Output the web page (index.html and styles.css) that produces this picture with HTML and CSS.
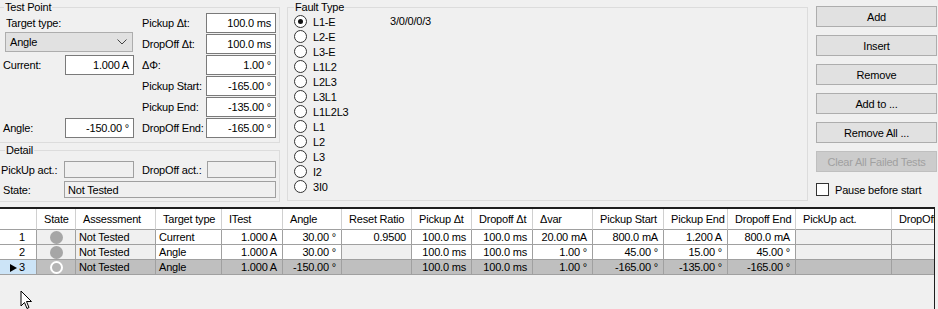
FILE: index.html
```html
<!DOCTYPE html>
<html lang="en">
<head>
  <meta charset="UTF-8" />
  <title>Test Points</title>
  <link rel="stylesheet" href="styles.css">
</head>
<body>

  <div class="top">
    <div class="left-col">
      <fieldset class="group test-point">
        <legend>Test Point</legend>
        <div class="tp-grid">
          <span class="lbl span2 tt">Target type:</span>
          <span class="lbl c4">Pickup Δt:</span>
          <span class="box c5">100.0 ms</span>

          <div class="combo span2">
            <span>Angle</span>
            <svg width="10" height="6" viewBox="0 0 10 6"><polyline points="0.5,0.5 5,5 9.5,0.5" fill="none" stroke="#444" stroke-width="1"/></svg>
          </div>
          <span class="lbl c4">DropOff Δt:</span>
          <span class="box c5">100.0 ms</span>

          <span class="lbl c1">Current:</span>
          <span class="box c2">1.000 A</span>
          <span class="lbl c4">ΔΦ:</span>
          <span class="box c5">1.00 °</span>

          <span class="lbl c4">Pickup Start:</span>
          <span class="box c5">-165.00 °</span>

          <span class="lbl c4">Pickup End:</span>
          <span class="box c5">-135.00 °</span>

          <span class="lbl c1">Angle:</span>
          <span class="box c2">-150.00 °</span>
          <span class="lbl c4">DropOff End:</span>
          <span class="box c5">-165.00 °</span>
        </div>
      </fieldset>

      <fieldset class="group detail">
        <legend>Detail</legend>
        <div class="dt-grid">
          <span class="lbl c1 tight">PickUp act.:</span>
          <span class="box off c2"></span>
          <span class="lbl c4">DropOff act.:</span>
          <span class="box off c5"></span>

          <span class="lbl c1">State:</span>
          <span class="box off state">Not Tested</span>
        </div>
      </fieldset>
    </div>

    <fieldset class="group fault">
      <legend>Fault Type</legend>
      <div class="fault-body">
        <div class="radios">
          <div class="radio-item"><span class="radio on"></span>L1-E</div>
          <div class="radio-item"><span class="radio"></span>L2-E</div>
          <div class="radio-item"><span class="radio"></span>L3-E</div>
          <div class="radio-item"><span class="radio"></span>L1L2</div>
          <div class="radio-item"><span class="radio"></span>L2L3</div>
          <div class="radio-item"><span class="radio"></span>L3L1</div>
          <div class="radio-item"><span class="radio"></span>L1L2L3</div>
          <div class="radio-item"><span class="radio"></span>L1</div>
          <div class="radio-item"><span class="radio"></span>L2</div>
          <div class="radio-item"><span class="radio"></span>L3</div>
          <div class="radio-item"><span class="radio"></span>I2</div>
          <div class="radio-item"><span class="radio"></span>3I0</div>
        </div>
        <div class="count">3/0/0/0/3</div>
      </div>
    </fieldset>

    <div class="actions">
      <button>Add</button>
      <button>Insert</button>
      <button>Remove</button>
      <button>Add to ...</button>
      <button>Remove All ...</button>
      <button disabled>Clear All Failed Tests</button>
      <div class="check-row"><span class="check"></span>Pause before start</div>
    </div>
  </div>

  <div class="grid-wrap">
    <table class="tests">
      <colgroup>
        <col class="w-rh"><col class="w-state"><col class="w-assess"><col class="w-type"><col class="w-itest">
        <col class="w-angle"><col class="w-reset"><col class="w-pdt"><col class="w-ddt"><col class="w-var">
        <col class="w-pstart"><col class="w-pend"><col class="w-dend"><col class="w-pact"><col class="w-dact">
      </colgroup>
      <thead>
        <tr>
          <th></th>
          <th>State</th>
          <th>Assessment</th>
          <th>Target type</th>
          <th>ITest</th>
          <th>Angle</th>
          <th>Reset Ratio</th>
          <th>Pickup Δt</th>
          <th>Dropoff Δt</th>
          <th>Δvar</th>
          <th>Pickup Start</th>
          <th>Pickup End</th>
          <th>Dropoff End</th>
          <th>PickUp act.</th>
          <th>DropOff act.</th>
        </tr>
      </thead>
      <tbody>
        <tr>
          <td class="rh">1</td>
          <td class="ro mid"><span class="dot"></span></td>
          <td class="ro">Not Tested</td>
          <td>Current</td>
          <td class="num">1.000 A</td>
          <td class="num">30.00 °</td>
          <td class="num">0.9500</td>
          <td class="num">100.0 ms</td>
          <td class="num">100.0 ms</td>
          <td class="num">20.00 mA</td>
          <td class="num">800.0 mA</td>
          <td class="num">1.200 A</td>
          <td class="num">800.0 mA</td>
          <td class="ro"></td>
          <td class="ro"></td>
        </tr>
        <tr>
          <td class="rh">2</td>
          <td class="ro mid"><span class="dot"></span></td>
          <td class="ro">Not Tested</td>
          <td>Angle</td>
          <td class="num">1.000 A</td>
          <td class="num">30.00 °</td>
          <td class="ro"></td>
          <td class="num">100.0 ms</td>
          <td class="num">100.0 ms</td>
          <td class="num">1.00 °</td>
          <td class="num">45.00 °</td>
          <td class="num">15.00 °</td>
          <td class="num">45.00 °</td>
          <td class="ro"></td>
          <td class="ro"></td>
        </tr>
        <tr class="sel">
          <td class="rh"><span class="arrow"></span>3</td>
          <td class="ro mid"><span class="dot ring"></span></td>
          <td class="ro">Not Tested</td>
          <td>Angle</td>
          <td class="num">1.000 A</td>
          <td class="num">-150.00 °</td>
          <td class="ro"></td>
          <td class="num">100.0 ms</td>
          <td class="num">100.0 ms</td>
          <td class="num">1.00 °</td>
          <td class="num">-165.00 °</td>
          <td class="num">-135.00 °</td>
          <td class="num">-165.00 °</td>
          <td class="ro"></td>
          <td class="ro"></td>
        </tr>
      </tbody>
    </table>
  </div>

  <svg class="cursor" width="14" height="21" viewBox="0 0 14 21">
    <path d="M1 1 L1 16 L4.5 12.5 L7 18.5 L9 17.5 L6.5 11.5 L11.5 11.5 Z" fill="#fff" stroke="#000" stroke-width="1" stroke-linejoin="miter"/>
  </svg>

</body>
</html>
```

FILE: styles.css
```css
body {
  margin: 0;
  width: 938px;
  height: 309px;
  overflow: hidden;
  position: relative;
  background: #f0f0f0;
  font-family: "Liberation Sans", Arial, sans-serif;
  font-size: 11px;
  letter-spacing: -0.2px;
  color: #000;
}
.top {
  display: flex;
  align-items: flex-start;
  padding-top: 1px;
  height: 207px;
  box-sizing: border-box;
}
.group {
  margin: 0;
  padding: 0;
  border: 1px solid #dcdcdc;
  min-width: 0;
}
.group legend {
  padding: 0 1px;
  margin-left: 4px;
  line-height: 12px;
}
.left-col {
  margin-left: -1px;
  width: 281px;
}
.tp-grid, .dt-grid {
  display: grid;
  grid-template-columns: 65px 69px 8px 64px 70px;
  padding-right: 3px;
}
.tp-grid {
  grid-template-rows: repeat(6, 21px);
  padding-bottom: 3px;
}
.detail {
  margin-top: 1px;
}
.detail legend {
  margin-left: 5px;
}
.dt-grid {
  grid-template-rows: 17px 17px;
  row-gap: 3px;
  padding-top: 5px;
  padding-bottom: 3px;
}
.c1 { grid-column: 1; }
.c2 { grid-column: 2; }
.c4 { grid-column: 4; }
.c5 { grid-column: 5; }
.span2 { grid-column: 1 / 3; }
.lbl {
  display: flex;
  align-items: center;
  height: 20px;
  white-space: nowrap;
}
.c1 { padding-left: 3px; }
.tight { padding-left: 1px; }
.tt { padding-left: 6px; }
.dt-grid .lbl { height: 17px; }
.box {
  height: 20px;
  box-sizing: border-box;
  border: 1px solid #7a7a7a;
  background: #fff;
  display: flex;
  align-items: center;
  justify-content: flex-end;
  padding-right: 4px;
  white-space: nowrap;
}
.box.off {
  height: 17px;
  background: #f0f0f0;
  border-color: #a0a0a0;
}
.dt-grid .c2 { margin-left: -1px; }
.dt-grid .c5 { margin-left: 1px; }
.box.state {
  grid-column: 2 / 6;
  margin-left: -1px;
  justify-content: flex-start;
  padding-left: 3px;
}
.combo {
  margin: -2px 1px 0 5px;
  height: 20px;
  box-sizing: border-box;
  border: 1px solid #adadad;
  background: #e1e1e1;
  display: flex;
  align-items: center;
  justify-content: space-between;
  padding: 0 5px 0 4px;
}
.fault {
  margin-left: 7px;
  width: 519px;
}
.fault legend {
  margin-left: 6px;
}
.fault-body {
  display: flex;
  padding: 1px 0 6px 6px;
}
.radios {
  width: 96px;
}
.radio-item {
  height: 15px;
  display: flex;
  align-items: center;
  gap: 6px;
}
.radio {
  width: 13px;
  height: 13px;
  box-sizing: border-box;
  border: 1px solid #333;
  border-radius: 50%;
  background: #fff;
  display: flex;
  align-items: center;
  justify-content: center;
}
.radio.on::after {
  content: "";
  width: 5px;
  height: 5px;
  border-radius: 50%;
  background: #111;
}
.count {
  line-height: 15px;
}
.actions {
  margin: 5px 0 0 8px;
  width: 121px;
  display: flex;
  flex-direction: column;
  gap: 8px;
}
.actions button {
  height: 21px;
  padding: 0;
  background: #e1e1e1;
  border: 1px solid #adadad;
  font: inherit;
  letter-spacing: inherit;
  color: #000;
}
.actions button:disabled {
  background: #cccccc;
  border-color: #bfbfbf;
  color: #a0a0a0;
}
.check-row {
  margin-top: 3px;
  display: flex;
  align-items: center;
  gap: 6px;
  height: 13px;
}
.check {
  width: 13px;
  height: 13px;
  box-sizing: border-box;
  border: 1px solid #333;
  background: #fff;
}
.grid-wrap {
  width: 935px;
  height: 102px;
  box-sizing: border-box;
  border-top: 2px solid #1e1e1e;
  border-right: 1px solid #1e1e1e;
  overflow: hidden;
}
.tests {
  width: 982px;
  table-layout: fixed;
  border-collapse: separate;
  border-spacing: 0;
}
.w-rh { width: 37px; }
.w-state { width: 39px; }
.w-assess { width: 80px; }
.w-type { width: 66px; }
.w-itest { width: 61px; }
.w-angle { width: 59px; }
.w-reset { width: 70px; }
.w-pdt { width: 60px; }
.w-ddt { width: 61px; }
.w-var { width: 60px; }
.w-pstart { width: 71px; }
.w-pend { width: 64px; }
.w-dend { width: 68px; }
.w-pact { width: 96px; }
.w-dact { width: 90px; }
.tests th, .tests td {
  box-sizing: border-box;
  white-space: nowrap;
  overflow: hidden;
}
.tests th {
  background: #fff;
  font-weight: normal;
  text-align: left;
  line-height: 20px;
  padding: 0 0 0 7px;
  border-right: 1px solid #d0d0d0;
  border-bottom: 1px solid #a0a0a0;
}
.tests td {
  background: #fff;
  line-height: 14px;
  padding: 0 5px 0 3px;
  border-right: 1px solid #a0a0a0;
  border-bottom: 1px solid #a0a0a0;
}
.tests td.num {
  text-align: right;
}
.tests td.ro {
  background: #f0f0f0;
}
.tests td.mid {
  text-align: center;
  padding: 0;
}
.tests td.rh {
  text-align: right;
  padding-right: 11px;
}
.tests tr.sel td {
  background: #bfbfbf;
}
.tests tr.sel td.rh {
  background: #cce4f7;
}
.dot {
  display: inline-block;
  width: 13px;
  height: 13px;
  box-sizing: border-box;
  border-radius: 50%;
  background: #a6a6a6;
  vertical-align: middle;
  margin-top: -2px;
}
.dot.ring {
  border: 2px solid #fff;
  background: #b4b4b4;
}
.arrow {
  display: inline-block;
  width: 0;
  height: 0;
  border-top: 4px solid transparent;
  border-bottom: 4px solid transparent;
  border-left: 7px solid #000;
  margin-right: 2px;
  vertical-align: -1px;
}
.cursor {
  position: absolute;
  left: 20px;
  top: 290px;
}
```
